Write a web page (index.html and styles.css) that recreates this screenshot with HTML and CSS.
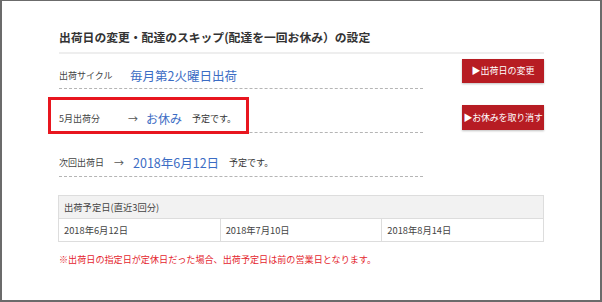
FILE: index.html
```html
<!DOCTYPE html>
<html lang="ja">
<head>
    <meta charset="utf-8">
    <title>出荷日の変更</title>
    <link rel="stylesheet" href="styles.css">
</head>
<body>
    <div class="frame">
        <div class="page">
            <h2 class="title">出荷日の変更・配達のスキップ(配達を一回お休み）の設定</h2>

            <!-- 出荷サイクル -->
            <div class="row first">
                <div class="info">
                    <span class="label cycle-label">出荷サイクル</span>
                    <span class="value">毎月第2火曜日出荷</span>
                </div>
                <a class="btn btn-change" href="#">▶出荷日の変更</a>
            </div>

            <!-- 今月のお休み -->
            <div class="row">
                <div class="info">
                    <span class="label skip-label">5月出荷分</span>
                    <span class="arrow">→</span>
                    <span class="value skip-value">お休み</span>
                    <span class="note-small">予定です。</span>
                    <span class="highlight"></span>
                </div>
                <a class="btn btn-cancel" href="#">▶お休みを取り消す</a>
            </div>

            <!-- 次回出荷日 -->
            <div class="row">
                <div class="info">
                    <span class="label next-label">次回出荷日</span>
                    <span class="arrow next-arrow">→</span>
                    <span class="value date-value">2018年6月12日</span>
                    <span class="note-small">予定です。</span>
                </div>
            </div>

            <table class="schedule">
                <tr>
                    <th colspan="3">出荷予定日(直近3回分)</th>
                </tr>
                <tr>
                    <td>2018年6月12日</td>
                    <td>2018年7月10日</td>
                    <td>2018年8月14日</td>
                </tr>
            </table>

            <p class="caution">※出荷日の指定日が定休日だった場合、出荷予定日は前の営業日となります。</p>
        </div>
    </div>
</body>
</html>
```

FILE: styles.css
```css
body {
    margin: 0;
    font-family: "Noto Sans CJK JP", "Noto Sans", sans-serif;
    color: #333;
    background: #fff;
}

.frame {
    width: 602px;
    height: 302px;
    box-sizing: border-box;
    border: 2px solid #6b6b6b;
    border-top-width: 1px;
    overflow: hidden;
}

.page {
    width: 485px;
    margin-left: 57px;
}

.title {
    margin: 0;
    padding: 28px 0 7px;
    font-size: 11.8px;
    line-height: 16px;
    font-weight: 700;
    color: #333;
    border-bottom: 2px solid #eee;
}

.row {
    display: flex;
    align-items: flex-start;
    height: 44px;
}

.row.first {
    height: 35px;
}

.info {
    position: relative;
    width: 364px;
    height: 100%;
    box-sizing: border-box;
    padding-top: 15px;
    display: flex;
    align-items: center;
    border-bottom: 1px dashed #b5b5b5;
}

.row.first .info {
    padding-top: 8px;
}

.label {
    font-size: 9px;
    color: #444;
}

.cycle-label {
    width: 71px;
}

.skip-label {
    width: 69px;
}

.next-label {
    margin-right: 10px;
}

.arrow {
    font-size: 10px;
    color: #555;
    margin-right: 8px;
}

.next-arrow {
    margin-right: 9px;
}

.value {
    font-size: 12.5px;
    color: #3b6cc4;
}

.skip-value {
    font-size: 12px;
    margin-right: 10px;
}

.date-value {
    font-size: 12.5px;
    margin-right: 10px;
}

.note-small {
    font-size: 9px;
    color: #333;
}

.highlight {
    position: absolute;
    left: -11px;
    top: 8px;
    width: 201px;
    height: 37px;
    box-sizing: border-box;
    border: 3px solid #e8161f;
}

.btn {
    display: block;
    margin-left: auto;
    width: 82px;
    height: 24px;
    line-height: 24px;
    text-align: center;
    white-space: nowrap;
    font-size: 9px;
    color: #fff;
    text-decoration: none;
    background: #b71c23;
    box-shadow: 0 1px 2px rgba(0, 0, 0, 0.25);
}

.btn-change {
    margin-top: 5px;
}

.btn-cancel {
    margin-top: 16px;
    height: 25px;
    line-height: 25px;
    letter-spacing: -0.2px;
}

.schedule {
    width: 486px;
    margin-top: 18px;
    margin-left: -1px;
    border-collapse: collapse;
    table-layout: fixed;
    font-size: 9.3px;
    color: #444;
}

.schedule th,
.schedule td {
    height: 22px;
    padding: 0 0 0 5px;
    border: 1px solid #ddd;
    text-align: left;
    font-weight: 400;
}

.schedule th {
    background: #f2f2f2;
}

.caution {
    margin: 10px 0 0;
    font-size: 9.1px;
    line-height: 14px;
    color: #e4262e;
}
```
